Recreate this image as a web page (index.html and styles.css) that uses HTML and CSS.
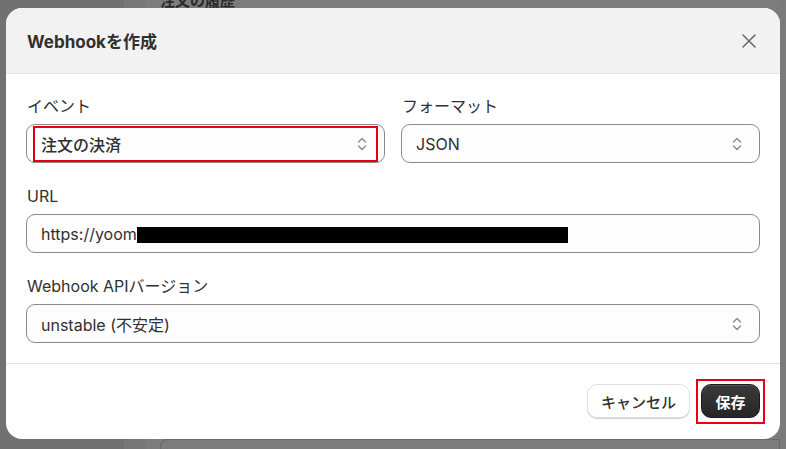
FILE: index.html
```html
<!DOCTYPE html>
<html lang="ja">
<head>
<meta charset="utf-8">
<link rel="stylesheet" href="styles.css">
</head>
<body>
<div class="page">
  <div class="side"></div>
  <div class="nav"></div>
  <div class="main">
    <div class="main-title">注文の履歴</div>
    <div class="main-card"></div>
  </div>
  <div class="rightbar"></div>
</div>

<div class="modal">
  <div class="modal-header">
    <h2 class="modal-title">Webhookを作成</h2>
    <button class="close" aria-label="閉じる">
      <svg width="14" height="14" viewBox="0 0 14 14"><path d="M1 1L13 13M13 1L1 13" stroke="#6b6b6b" stroke-width="1.6" stroke-linecap="round"/></svg>
    </button>
  </div>
  <div class="modal-body">
    <div class="row">
      <div class="field">
        <div class="label">イベント</div>
        <div class="select">
          <span class="value strong">注文の決済</span>
          <svg class="chev" width="10" height="16" viewBox="0 0 10 16"><path d="M1.5 6L5 2.5L8.5 6M1.5 10L5 13.5L8.5 10" fill="none" stroke="#8a8a8a" stroke-width="1.4" stroke-linecap="round" stroke-linejoin="round"/></svg>
        </div>
      </div>
      <div class="field">
        <div class="label">フォーマット</div>
        <div class="select">
          <span class="value">JSON</span>
          <svg class="chev" width="10" height="16" viewBox="0 0 10 16"><path d="M1.5 6L5 2.5L8.5 6M1.5 10L5 13.5L8.5 10" fill="none" stroke="#8a8a8a" stroke-width="1.4" stroke-linecap="round" stroke-linejoin="round"/></svg>
        </div>
      </div>
    </div>
    <div class="field">
      <div class="label">URL</div>
      <div class="select">
        <span class="value">https://yoom<span class="redact"></span></span>
      </div>
    </div>
    <div class="field">
      <div class="label">Webhook APIバージョン</div>
      <div class="select">
        <span class="value">unstable (不安定)</span>
        <svg class="chev" width="10" height="16" viewBox="0 0 10 16"><path d="M1.5 6L5 2.5L8.5 6M1.5 10L5 13.5L8.5 10" fill="none" stroke="#8a8a8a" stroke-width="1.4" stroke-linecap="round" stroke-linejoin="round"/></svg>
      </div>
    </div>
  </div>
  <div class="modal-footer">
    <button class="btn btn-secondary">キャンセル</button>
    <button class="btn btn-primary">保存</button>
  </div>
  <div class="mark mark-event"></div>
  <div class="mark mark-save"></div>
</div>
</body>
</html>
```

FILE: styles.css
```css
* { box-sizing: border-box; }
html, body { margin: 0; padding: 0; }
body {
  width: 786px;
  height: 449px;
  overflow: hidden;
  background: #7a7a7a;
  font-family: "Inter", "Noto Sans CJK JP", sans-serif;
  color: #303030;
  position: relative;
}
.page {
  display: flex;
  height: 449px;
}
.side { width: 123px; background: #717171; }
.nav { width: 22px; background: #777777; border-left: 1px solid #6e6e6e; }
.main { flex: 1; background: #7c7c7c; padding: 0 0 0 15px; display: flex; flex-direction: column; justify-content: space-between; }
.main-title { font-size: 15px; line-height: 18px; font-weight: 700; color: #2a2a2a; margin-top: -8px; padding-left: 0; }
.main-card { height: 10px; border: 1px solid #6a6a6a; border-bottom: none; border-radius: 8px 0 0 0; }
.rightbar { width: 6px; background: #7a7a7a; }

.modal {
  position: absolute;
  left: 6px;
  top: 8px;
  width: 774px;
  height: 431px;
  background: #ffffff;
  border-radius: 16px;
  overflow: hidden;
  display: flex;
  flex-direction: column;
}
.modal-header {
  height: 66px;
  background: #f2f2f2;
  border-bottom: 1px solid #e3e3e3;
  display: flex;
  align-items: center;
  justify-content: space-between;
  padding: 0 24px 0 21px;
}
.modal-title {
  margin: 0;
  font-size: 17px;
  font-weight: 700;
  color: #303030;
}
.close {
  border: 0;
  background: none;
  padding: 0;
  width: 14px;
  height: 14px;
  display: flex;
}
.modal-body {
  padding: 22px 20px 20px 20px;
  display: flex;
  flex-direction: column;
  gap: 23px;
  border-bottom: 1px solid #e3e3e3;
}
.row { display: flex; gap: 16px; }
.row .field { flex: 1; }
.field { display: flex; flex-direction: column; gap: 8px; }
.label { font-size: 16px; line-height: 20px; color: #303030; padding-left: 1px; }
.select {
  height: 39px;
  border: 1px solid #8a8a8a;
  border-radius: 9px;
  background: #fdfdfd;
  display: flex;
  align-items: center;
  justify-content: space-between;
  padding: 0 17px 0 14px;
}
.value { font-size: 16px; color: #303030; display: flex; align-items: center; white-space: nowrap; }
.value.strong { font-weight: 500; }
.redact { display: inline-block; width: 431px; height: 16px; background: #000; margin-top: 2px; }
.chev { display: block; }

.modal-footer {
  flex: 1;
  display: flex;
  justify-content: flex-end;
  align-items: flex-start;
  gap: 11px;
  padding: 20px 20px 0 0;
}
.btn {
  height: 34px;
  border-radius: 10px;
  font-family: "Inter", "Noto Sans CJK JP", sans-serif;
  font-size: 15px;
  font-weight: 700;
  padding: 0;
}
.btn-secondary {
  width: 103px;
  background: #ffffff;
  border: 1px solid #e1e1e1;
  box-shadow: 0 1px 0 #d0d0d0;
  color: #303030;
  font-weight: 500;
}
.btn-primary {
  width: 59px;
  background: linear-gradient(#3a3a3a, #262626);
  border: 1px solid #1a1a1a;
  box-shadow: inset 0 1px 0 #555;
  color: #ffffff;
}
.mark { position: absolute; border: 2px solid #e60012; }
.mark-event { left: 27px; top: 118px; width: 345px; height: 36px; }
.mark-save { left: 690px; top: 371px; width: 69px; height: 45px; }
```
